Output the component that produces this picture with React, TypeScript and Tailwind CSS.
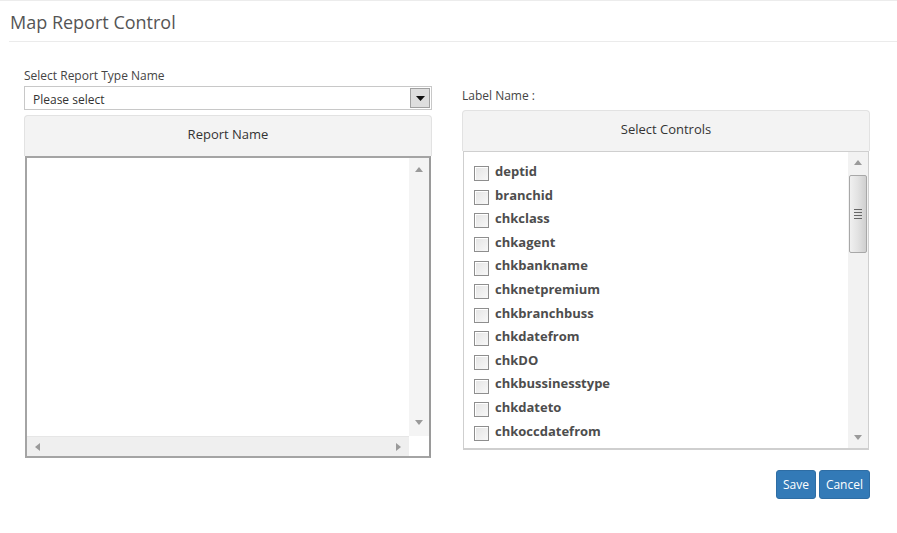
import React from "react";

const items = [
  "deptid",
  "branchid",
  "chkclass",
  "chkagent",
  "chkbankname",
  "chknetpremium",
  "chkbranchbuss",
  "chkdatefrom",
  "chkDO",
  "chkbussinesstype",
  "chkdateto",
  "chkoccdatefrom",
  "chkoccdateto",
];

function Tri({ dir }: { dir: "up" | "down" | "left" | "right" }) {
  const pts =
    dir === "up"
      ? "0,5 4,0 8,5"
      : dir === "down"
      ? "0,0 8,0 4,5"
      : dir === "left"
      ? "5,0 5,8 0,4"
      : "0,0 0,8 5,4";
  const w = dir === "up" || dir === "down" ? 8 : 5;
  const h = dir === "up" || dir === "down" ? 5 : 8;
  return (
    <svg width={w} height={h} viewBox={`0 0 ${w} ${h}`}>
      <polygon points={pts} fill="#9a9a9a" />
    </svg>
  );
}

export default function App() {
  return (
    <div
      className="w-[897px] h-[533px] bg-white border-t border-[#ececec] text-[#333]"
      style={{ fontFamily: '"Open Sans", "Liberation Sans", sans-serif' }}
    >
      <div className="ml-[9px] h-[41px] border-b border-[#ebebeb] flex items-center">
        <h1 className="text-[18px] leading-none text-[#555] pl-[1px] mt-[1px]">Map Report Control</h1>
      </div>

      <div className="flex ml-[24px] gap-[30px]">
        {/* Left column */}
        <div className="w-[408px] pt-[25px]">
          <div className="text-[12px] leading-[17px] text-[#444]">Select Report Type Name</div>
          <div className="mt-[2px] h-[24px] border border-[#c8c8c8] flex items-center justify-between pl-[8px] pr-[1px]">
            <span className="text-[12px] text-[#333] mt-[4px]">Please select</span>
            <div className="w-[20px] h-[20px] bg-[#dedede] border border-[#a0a0a0] flex items-center justify-center">
              <svg width="9" height="5" viewBox="0 0 9 5">
                <polygon points="0,0 9,0 4.5,5" fill="#111" />
              </svg>
            </div>
          </div>
          <div className="mt-[5px] h-[41px] bg-[#f3f3f3] border border-[#e2e2e2] border-b-0 rounded-t-[4px] flex items-center justify-center pb-[2px]">
            <span className="text-[13px] text-[#333]">Report Name</span>
          </div>
          <div className="mx-[1px] h-[302px] border-2 border-[#a4a4a4] border-r-[#9a9a9a] flex flex-col">
            <div className="flex-1 flex">
              <div className="flex-1" />
              <div className="w-[20px] bg-[#f4f4f4] flex flex-col items-center justify-between pt-[9px] pb-[11px]">
                <Tri dir="up" />
                <Tri dir="down" />
              </div>
            </div>
            <div className="h-[20px] flex">
              <div className="flex-1 bg-[#efefef] border-t border-[#e6e6e6] flex items-center justify-between px-[8px]">
                <Tri dir="left" />
                <Tri dir="right" />
              </div>
              <div className="w-[20px] bg-white" />
            </div>
          </div>
        </div>

        {/* Right column */}
        <div className="w-[408px] pt-[45px]">
          <div className="text-[12px] leading-[17px] text-[#444]">Label Name :</div>
          <div className="mt-[6px] h-[41px] bg-[#f3f3f3] border border-[#e2e2e2] border-b-0 rounded-t-[4px] flex items-center justify-center pb-[2px]">
            <span className="text-[13px] text-[#333]">Select Controls</span>
          </div>
          <div className="mx-[1px] h-[299px] border border-[#cfcfcf] border-b-2 flex overflow-hidden">
            <div className="flex-1 pt-[8px] pl-[10px] overflow-hidden">
              {items.map((it) => (
                <div key={it} className="h-[23.6px] flex items-center gap-[6px]">
                  <span className="mt-[4px] w-[15px] h-[15px] border border-[#8e8e8e] bg-gradient-to-br from-[#e4e4e4] to-[#f8f8f8] shadow-[inset_1px_1px_0_#fff]" />
                  <span className="text-[13px] font-bold text-[#4d4d4d]">{it}</span>
                </div>
              ))}
            </div>
            <div className="w-[20px] bg-[#f2f2f2] flex flex-col items-center pt-[8px] pb-[8px]">
              <Tri dir="up" />
              <div className="mt-[10px] w-[18px] h-[78px] border border-[#a8a8a8] rounded-[2px] bg-gradient-to-r from-[#f0f0f0] via-[#e2e2e2] to-[#cfcfcf] flex flex-col items-center justify-center gap-[2px]">
                <div className="w-[8px] h-[1px] bg-[#666]" />
                <div className="w-[8px] h-[1px] bg-[#666]" />
                <div className="w-[8px] h-[1px] bg-[#666]" />
                <div className="w-[8px] h-[1px] bg-[#666]" />
              </div>
              <div className="flex-1" />
              <Tri dir="down" />
            </div>
          </div>
          <div className="mt-[20px] flex justify-end gap-[3px]">
            <button className="h-[29px] px-[6px] bg-[#337ab7] border border-[#2e6da4] rounded-[3px] text-white text-[12px]">
              Save
            </button>
            <button className="h-[29px] px-[6px] bg-[#337ab7] border border-[#2e6da4] rounded-[3px] text-white text-[12px]">
              Cancel
            </button>
          </div>
        </div>
      </div>
    </div>
  );
}
